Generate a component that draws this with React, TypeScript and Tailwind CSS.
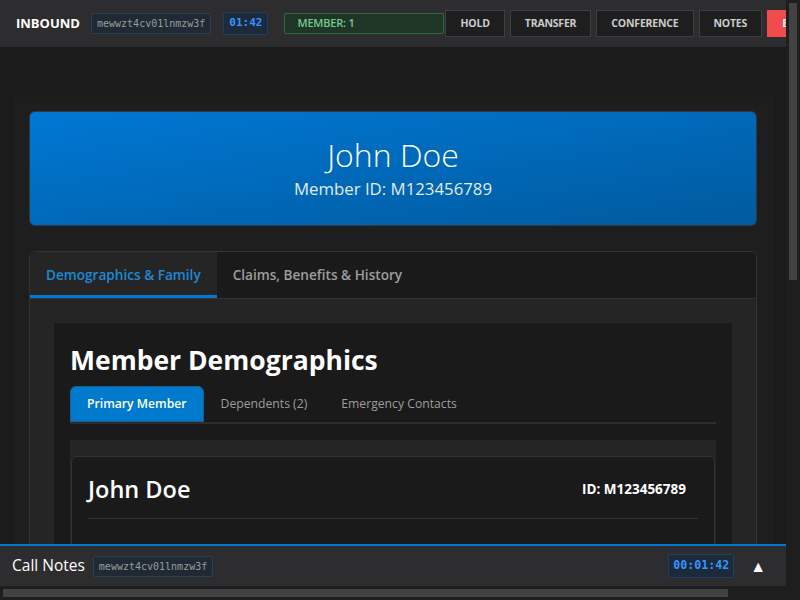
import React from 'react';

const sessionId = 'mewwzt4cv01lnmzw3f';

function Header() {
  const buttons = ['HOLD', 'TRANSFER', 'CONFERENCE', 'NOTES'];
  return (
    <header className="flex h-[47px] w-full items-center bg-[#2d2d30] pl-4">
      <span className="shrink-0 text-[13px] font-bold text-white">INBOUND</span>
      <span className="ml-[11px] flex h-[21px] shrink-0 items-center rounded-[2px] border border-[#2a3f52] bg-[#1f2a35] px-[5px] font-['DejaVu_Sans_Mono',monospace] text-[10px] text-[#9a9a9a]">
        {sessionId}
      </span>
      <span className="ml-3 flex h-[23px] shrink-0 items-center rounded-[2px] border border-[#1f3f5f] bg-[#1b2b3b] px-[5px] font-['DejaVu_Sans_Mono',monospace] text-[11px] font-bold text-[#3794ff]">
        01:42
      </span>
      <span className="ml-4 flex h-[21px] w-[160px] shrink-0 items-center rounded-[2px] border border-[#2e6b3b] bg-[#1f3525] px-3 text-[11px] font-semibold tracking-[-0.2px] text-[#73c991]">
        MEMBER: 1
      </span>
      <div className="ml-px flex shrink-0 gap-[5px]">
        {buttons.map((b) => (
          <button
            key={b}
            className="h-[27px] shrink-0 border border-[#3e3e42] bg-[#1e1e1e] px-[14px] text-[10.5px] font-bold tracking-[-0.2px] text-[#cccccc]"
          >
            {b}
          </button>
        ))}
        <button className="h-[27px] shrink-0 border border-[#f14c4c] bg-[#f14c4c] px-[14px] text-[10.5px] font-bold tracking-[-0.2px] text-white">
          END CALL
        </button>
      </div>
    </header>
  );
}

function Banner() {
  return (
    <div className="rounded-md border border-[#2b3a4a] bg-gradient-to-br from-[#0078d4] to-[#005a9e] pt-[23px] pb-[24px] text-center">
      <h1 className="text-[32px] leading-[40px] font-light text-white">John Doe</h1>
      <p className="mt-[2px] text-[16.8px] leading-6 text-[#e3ebf3]">Member ID: M123456789</p>
    </div>
  );
}

function SubTabs() {
  return (
    <div className="flex border-b-2 border-[#2d2d30]">
      <button className="h-[36px] rounded-t-md border border-[#1a5f94] bg-[#007acc] px-4 text-[12.2px] font-semibold text-white">
        Primary Member
      </button>
      <button className="h-[36px] border border-transparent px-4 text-[12.2px] font-medium text-[#9d9d9d]">
        Dependents (2)
      </button>
      <button className="h-[36px] border border-transparent px-4 text-[12.2px] font-medium text-[#9d9d9d]">
        Emergency Contacts
      </button>
    </div>
  );
}

function MemberCard() {
  return (
    <div className="mt-4 bg-[#252526] px-px pt-4">
      <div className="min-h-[560px] rounded-md border border-[#333333] bg-[#1a1a1a] p-4">
        <div className="flex items-center justify-between border-b border-[#333333] pb-3">
          <h3 className="text-[23.5px] leading-[33px] font-semibold text-white">John Doe</h3>
          <span className="pr-3 text-[13.5px] font-bold text-white">ID: M123456789</span>
        </div>
      </div>
    </div>
  );
}

function MainTabs() {
  return (
    <div className="mt-[25px] overflow-hidden rounded-md border border-[#333333]">
      <div className="flex h-[47px] border-b border-[#333333] bg-[#1a1a1a]">
        <button className="border-b-[3px] border-[#0078d4] bg-[#252526] px-4 pt-[3px] text-[13.6px] font-semibold text-[#1a8ad4]">
          Demographics &amp; Family
        </button>
        <button className="border-b-[3px] border-transparent px-4 pt-[3px] text-[13.6px] font-semibold text-[#9d9d9d]">
          Claims, Benefits &amp; History
        </button>
      </div>
      <div className="bg-[#252526] p-6">
        <section className="bg-[#1a1a1a] p-4">
          <h2 className="text-[26.5px] leading-[42px] font-bold text-white">Member Demographics</h2>
          <div className="mt-[5px]">
            <SubTabs />
            <MemberCard />
          </div>
        </section>
      </div>
    </div>
  );
}

function Footer() {
  return (
    <div className="absolute right-0 bottom-0 left-0 z-20 flex h-[42px] items-center border-t-2 border-[#007acc] bg-[#2d2d30] pr-5 pl-3">
      <span className="text-[15.5px] text-white">Call Notes</span>
      <span className="ml-2 flex h-[21px] items-center rounded-[2px] border border-[#2a3f52] bg-[#1f2a35] px-[5px] font-['DejaVu_Sans_Mono',monospace] text-[10px] text-[#9a9a9a]">
        {sessionId}
      </span>
      <span className="ml-auto flex h-[24px] items-center rounded-[2px] border border-[#1f3f5f] bg-[#1b2b3b] px-[4px] font-['DejaVu_Sans_Mono',monospace] text-[11.6px] font-bold text-[#3794ff]">
        00:01:42
      </span>
      <span className="ml-4 text-base text-white">▲</span>
    </div>
  );
}

export default function App() {
  return (
    <div className="grid h-screen w-screen grid-cols-[1fr_14px] grid-rows-[1fr_14px] overflow-hidden bg-[#1b1b1b] font-['Open_Sans',sans-serif] text-[#cccccc]">
      {/* page viewport */}
      <div className="relative overflow-hidden">
        <Header />
        <main className="pt-[50px] pr-[13px] pl-[13px]">
          <div className="bg-[#1e1e1e] px-4 pt-[14px] pb-8">
            <Banner />
            <MainTabs />
          </div>
        </main>
        <Footer />
      </div>
      {/* vertical scrollbar */}
      <div className="bg-[#1e1e1e] p-[3px]">
        <div className="h-[277px] bg-[#424242]" />
      </div>
      {/* horizontal scrollbar */}
      <div className="bg-[#1e1e1e] p-[3px]">
        <div className="h-full w-[725px] bg-[#424242]" />
      </div>
      <div className="bg-[#1e1e1e]" />
    </div>
  );
}
